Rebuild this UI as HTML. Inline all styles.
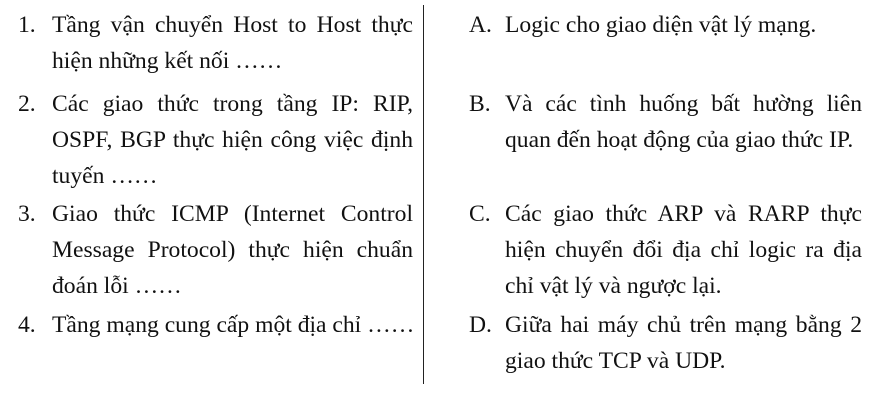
<!DOCTYPE html>
<html><head><meta charset="utf-8"><style>
body{margin:0;width:887px;height:410px;background:#fff;position:relative;overflow:hidden;font-family:"Liberation Serif",serif;font-size:23.6px;color:#111}
.l{position:absolute;height:34px;line-height:34px;white-space:nowrap}
.j{text-align:justify;text-align-last:justify;white-space:normal}
.vl{position:absolute;left:423px;top:5px;width:1.3px;height:379px;background:#222}
</style></head><body>
<div class="vl"></div>
<div class="l" style="left:18px;top:8px">1.</div>
<div class="l j" style="left:52px;width:361px;top:8px">Tầng vận chuyển Host to Host thực</div>
<div class="l" style="left:52px;top:44px">hiện những kết nối ……</div>

<div class="l" style="left:18px;top:87px">2.</div>
<div class="l j" style="left:52px;width:361px;top:87px">Các giao thức trong tầng IP: RIP,</div>
<div class="l j" style="left:52px;width:361px;top:123px">OSPF, BGP thực hiện công việc định</div>
<div class="l" style="left:52px;top:159px">tuyến ……</div>

<div class="l" style="left:18px;top:197px">3.</div>
<div class="l j" style="left:52px;width:361px;top:197px">Giao thức ICMP (Internet Control</div>
<div class="l j" style="left:52px;width:361px;top:233px">Message Protocol) thực hiện chuẩn</div>
<div class="l" style="left:52px;top:269px">đoán lỗi ……</div>

<div class="l" style="left:18px;top:308px">4.</div>
<div class="l" style="left:52px;top:308px">Tầng mạng cung cấp một địa chỉ ……</div>

<div class="l" style="left:469px;top:8px">A.</div>
<div class="l" style="left:505px;top:8px">Logic cho giao diện vật lý mạng.</div>

<div class="l" style="left:469px;top:87px">B.</div>
<div class="l j" style="left:505px;width:357px;top:87px">Và các tình huống bất hường liên</div>
<div class="l" style="left:505px;top:123px">quan đến hoạt động của giao thức IP.</div>

<div class="l" style="left:469px;top:197px">C.</div>
<div class="l j" style="left:505px;width:357px;top:197px">Các giao thức ARP và RARP thực</div>
<div class="l j" style="left:505px;width:357px;top:233px">hiện chuyển đổi địa chỉ logic ra địa</div>
<div class="l" style="left:505px;top:269px">chỉ vật lý và ngược lại.</div>

<div class="l" style="left:469px;top:308px">D.</div>
<div class="l j" style="left:505px;width:357px;top:308px">Giữa hai máy chủ trên mạng bằng 2</div>
<div class="l" style="left:505px;top:344px">giao thức TCP và UDP.</div>
</body></html>
